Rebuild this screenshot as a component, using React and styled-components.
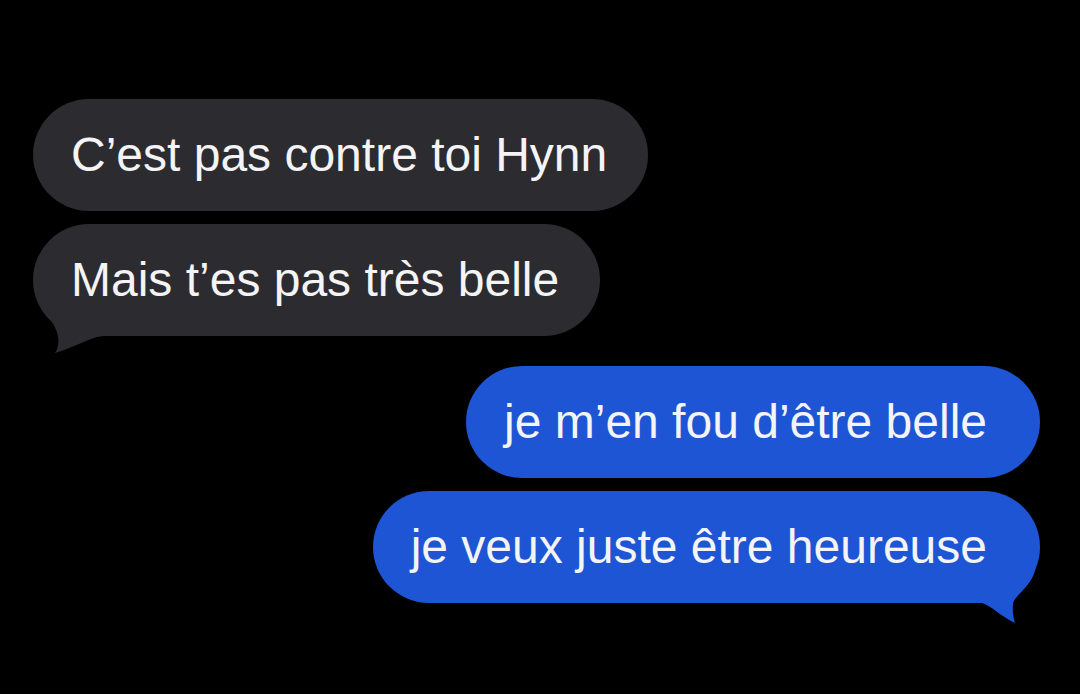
import React from 'react';
import styled, { createGlobalStyle } from 'styled-components';

const GlobalStyle = createGlobalStyle`
  html, body {
    margin: 0;
    padding: 0;
    background: #000;
  }
  body {
    font-family: "Liberation Sans", Arial, sans-serif;
    -webkit-font-smoothing: antialiased;
  }
`;

const colors = {
	incoming: '#2c2c30',
	outgoing: '#1e55d5',
};

const messages = [
	{ from: 'them', lines: ['C\u2019est pas contre toi Hynn', 'Mais t\u2019es pas très belle'] },
	{ from: 'me', lines: ['je m\u2019en fou d\u2019être belle', 'je veux juste être heureuse'] },
];

// little curled tails under the last bubble of a group
const TailLeft = ({ color }) => (
	<TailSvg $side="left" width="75" height="60" viewBox="0 0 75 60">
		<path
			fill={color}
			d="M4 0 L60 0 L70 40 C55 42 40 52 22 57 C27 50 27 38 19 26 C13 18 6 10 4 0 Z"
		/>
	</TailSvg>
);

const TailRight = ({ color }) => (
	<TailSvg $side="right" width="70" height="62" viewBox="0 0 70 62">
		<path
			fill={color}
			d="M10 0 L66 0 C64 21 44 30 43 39 C42 48 44 54 45 58 C30 51 22 41 12 38 Z"
		/>
	</TailSvg>
);

const Bubble = ({ mine, last, children }) => {
	const color = mine ? colors.outgoing : colors.incoming;
	return (
		<StyledBubble $mine={mine} $color={color}>
			{children}
			{last && (mine ? <TailRight color={color} /> : <TailLeft color={color} />)}
		</StyledBubble>
	);
};

const App = () => (
	<>
		<GlobalStyle />
		<Thread>
			{messages.map((group, i) => {
				const mine = group.from === 'me';
				return (
					<Group key={i} $mine={mine}>
						{group.lines.map((line, j) => (
							<Bubble key={j} mine={mine} last={j === group.lines.length - 1}>
								{line}
							</Bubble>
						))}
					</Group>
				);
			})}
		</Thread>
	</>
);

const Thread = styled.div`
    height: 694px;
    box-sizing: border-box;
    padding: 99px 40px 0 33px;
    display: flex;
    flex-direction: column;
    gap: 30px;
    overflow: hidden;
`;

const Group = styled.div`
    display: flex;
    flex-direction: column;
    align-items: ${({ $mine }) => ($mine ? 'flex-end' : 'flex-start')};
    gap: 13px;
`;

const StyledBubble = styled.div`
    position: relative;
    height: 112px;
    box-sizing: border-box;
    padding: ${({ $mine }) => ($mine ? '0 53px 0 38px' : '0 41px 0 38px')};
    border-radius: 56px;
    background: ${({ $color }) => $color};
    color: #f4f4f6;
    font-size: 48px;
    line-height: 112px;
    white-space: nowrap;
`;

const TailSvg = styled.svg`
    position: absolute;
    display: block;
    ${({ $side }) =>
		$side === 'left'
			? 'left: 0; bottom: -20px;'
			: 'right: 0; bottom: -24px;'}
`;

export default App;
